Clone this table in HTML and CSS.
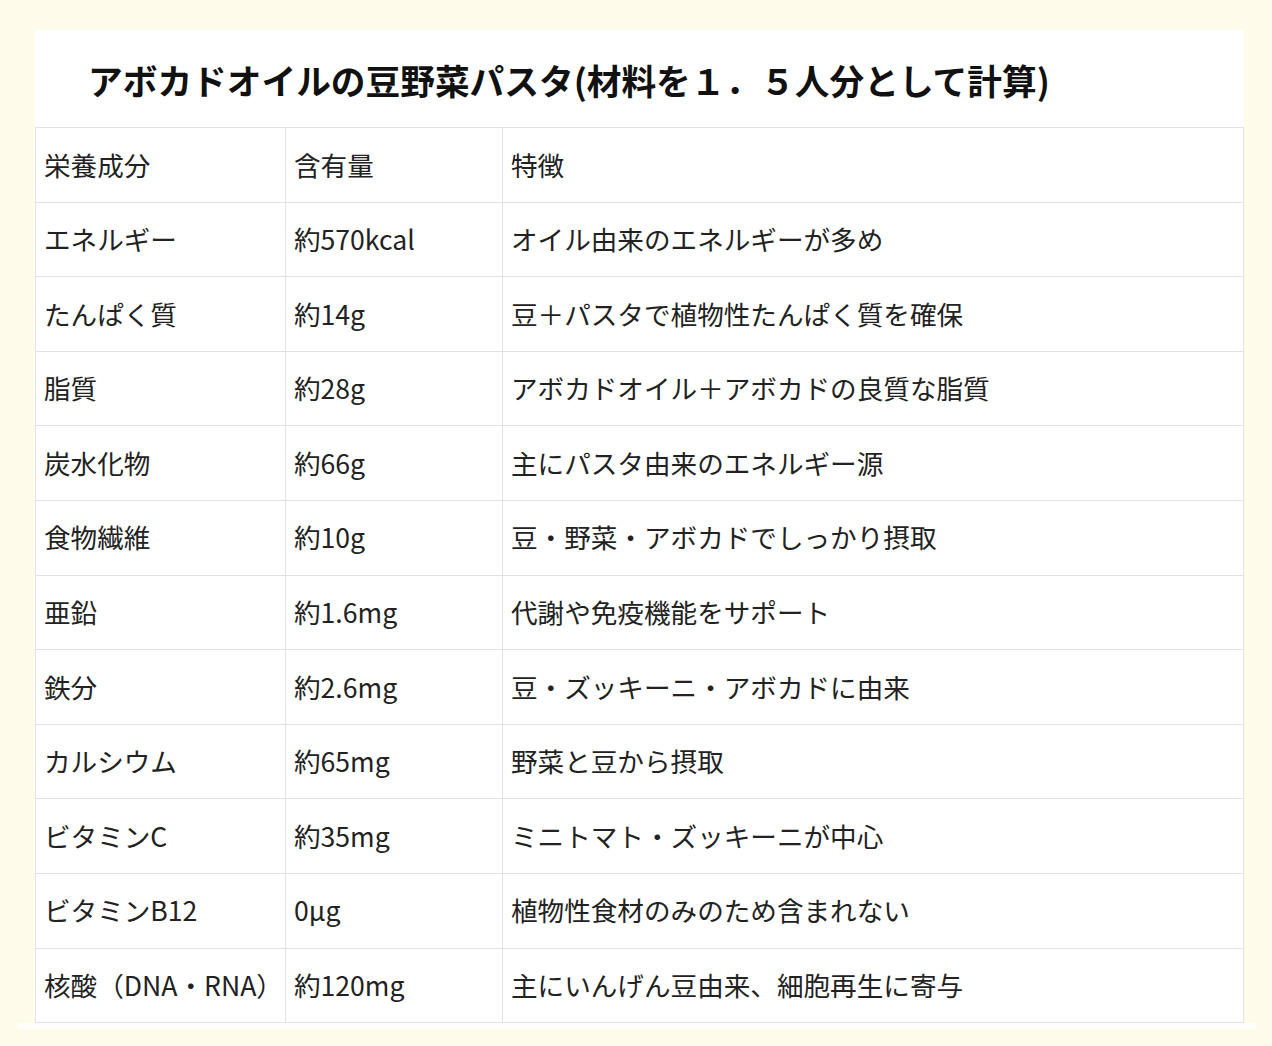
FILE: index.html
```html
<!DOCTYPE html>
<html lang="ja">
<head>
<meta charset="utf-8">
<title>アボカドオイルの豆野菜パスタ</title>
<link rel="stylesheet" href="styles.css">
</head>
<body>
<div class="page">
  <div class="card">
    <h2 class="title">アボカドオイルの豆野菜パスタ(材料を１．５人分として計算)</h2>
    <table class="nutri">
      <colgroup>
        <col class="c1"><col class="c2"><col class="c3">
      </colgroup>
      <tbody>
        <tr><td>栄養成分</td><td>含有量</td><td>特徴</td></tr>
        <tr><td>エネルギー</td><td>約570kcal</td><td>オイル由来のエネルギーが多め</td></tr>
        <tr><td>たんぱく質</td><td>約14g</td><td>豆＋パスタで植物性たんぱく質を確保</td></tr>
        <tr><td>脂質</td><td>約28g</td><td>アボカドオイル＋アボカドの良質な脂質</td></tr>
        <tr><td>炭水化物</td><td>約66g</td><td>主にパスタ由来のエネルギー源</td></tr>
        <tr><td>食物繊維</td><td>約10g</td><td>豆・野菜・アボカドでしっかり摂取</td></tr>
        <tr><td>亜鉛</td><td>約1.6mg</td><td>代謝や免疫機能をサポート</td></tr>
        <tr><td>鉄分</td><td>約2.6mg</td><td>豆・ズッキーニ・アボカドに由来</td></tr>
        <tr><td>カルシウム</td><td>約65mg</td><td>野菜と豆から摂取</td></tr>
        <tr><td>ビタミンC</td><td>約35mg</td><td>ミニトマト・ズッキーニが中心</td></tr>
        <tr><td>ビタミンB12</td><td>0μg</td><td>植物性食材のみのため含まれない</td></tr>
        <tr><td>核酸（DNA・RNA）</td><td>約120mg</td><td>主にいんげん豆由来、細胞再生に寄与</td></tr>
      </tbody>
    </table>
  </div>
  <div class="strip"></div>
</div>
</body>
</html>
```
FILE: styles.css
```css
html, body {
  margin: 0;
  padding: 0;
  background: #fffbeb;
}
body {
  font-family: "Noto Sans CJK JP", "Noto Sans", sans-serif;
  color: #222;
}
.page {
  padding: 30px 28px 0 35px;
}
.card {
  background: #fff;
}
.title {
  margin: 0;
  height: 97px;
  box-sizing: border-box;
  padding: 3px 0 0 53px;
  display: flex;
  align-items: center;
  font-size: 34.7px;
  font-weight: 700;
  color: #111;
  white-space: nowrap;
}
.nutri {
  width: 100%;
  border-collapse: collapse;
  table-layout: fixed;
  font-size: 26.6px;
}
.c1 { width: 250px; }
.c2 { width: 217px; }
.nutri td {
  border: 1px solid #e2e2e2;
  padding: 17.5px 8px;
  line-height: 38.6px;
  white-space: nowrap;
  vertical-align: middle;
}
.strip {
  height: 6px;
  margin: 0 -12px 0 -18px;
  background: #fffefa;
}
```
